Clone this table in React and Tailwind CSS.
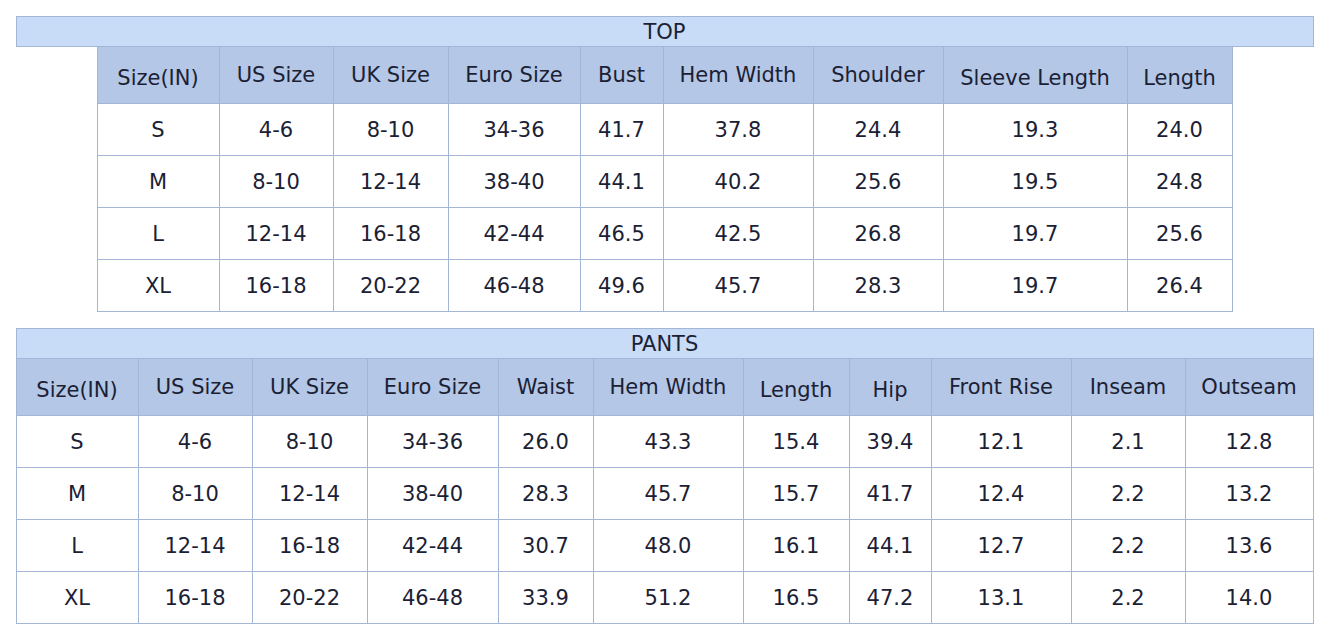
import React from 'react'

const top = {
    title: "TOP",
    widths: [122, 114, 115, 132, 83, 150, 130, 184, 105],
    head: ["Size(IN)", "US Size", "UK Size", "Euro Size", "Bust", "Hem Width", "Shoulder", "Sleeve Length", "Length"],
    low: [0, 7, 8],
    rows: [
        ["S", "4-6", "8-10", "34-36", "41.7", "37.8", "24.4", "19.3", "24.0"],
        ["M", "8-10", "12-14", "38-40", "44.1", "40.2", "25.6", "19.5", "24.8"],
        ["L", "12-14", "16-18", "42-44", "46.5", "42.5", "26.8", "19.7", "25.6"],
        ["XL", "16-18", "20-22", "46-48", "49.6", "45.7", "28.3", "19.7", "26.4"],
    ],
}

const pants = {
    title: "PANTS",
    widths: [122, 114, 115, 131, 95, 150, 106, 82, 140, 114, 128],
    head: ["Size(IN)", "US Size", "UK Size", "Euro Size", "Waist", "Hem Width", "Length", "Hip", "Front Rise", "Inseam", "Outseam"],
    low: [0, 6, 7],
    rows: [
        ["S", "4-6", "8-10", "34-36", "26.0", "43.3", "15.4", "39.4", "12.1", "2.1", "12.8"],
        ["M", "8-10", "12-14", "38-40", "28.3", "45.7", "15.7", "41.7", "12.4", "2.2", "13.2"],
        ["L", "12-14", "16-18", "42-44", "30.7", "48.0", "16.1", "44.1", "12.7", "2.2", "13.6"],
        ["XL", "16-18", "20-22", "46-48", "33.9", "51.2", "16.5", "47.2", "13.1", "2.2", "14.0"],
    ],
}

const SizeTable = ({ data }) => {
    return (
        <div className="flex flex-col items-center">
            <div className="w-[1298px] h-[31px] border border-[#a3b6d6] bg-[#c8dbf7] flex items-center justify-center">
                {data.title}
            </div>
            <div className="border-l border-[#a3b6d6]">
                <div className="flex bg-[#b4c7e6]">
                    {data.head.map((h, i) => (
                        <div
                            key={i}
                            style={{ width: data.widths[i] }}
                            className={"h-[57px] border-r border-b border-[#a3b6d6] flex items-center justify-center " + (data.low.includes(i) ? "pt-[6px]" : "")}
                        >
                            {h}
                        </div>
                    ))}
                </div>
                {data.rows.map((row, r) => (
                    <div key={r} className="flex bg-white">
                        {row.map((c, i) => (
                            <div
                                key={i}
                                style={{ width: data.widths[i] }}
                                className="h-[52px] border-r border-b border-[#a3b6d6] flex items-center justify-center"
                            >
                                {c}
                            </div>
                        ))}
                    </div>
                ))}
            </div>
        </div>
    )
}

export default function App() {
    return (
        <div className="w-[1329px] h-[644px] bg-white pt-4 flex flex-col gap-4 text-[21px] leading-[24px] text-[#1b2134] font-['DejaVu_Sans',sans-serif]">
            <SizeTable data={top} />
            <SizeTable data={pants} />
        </div>
    )
}
